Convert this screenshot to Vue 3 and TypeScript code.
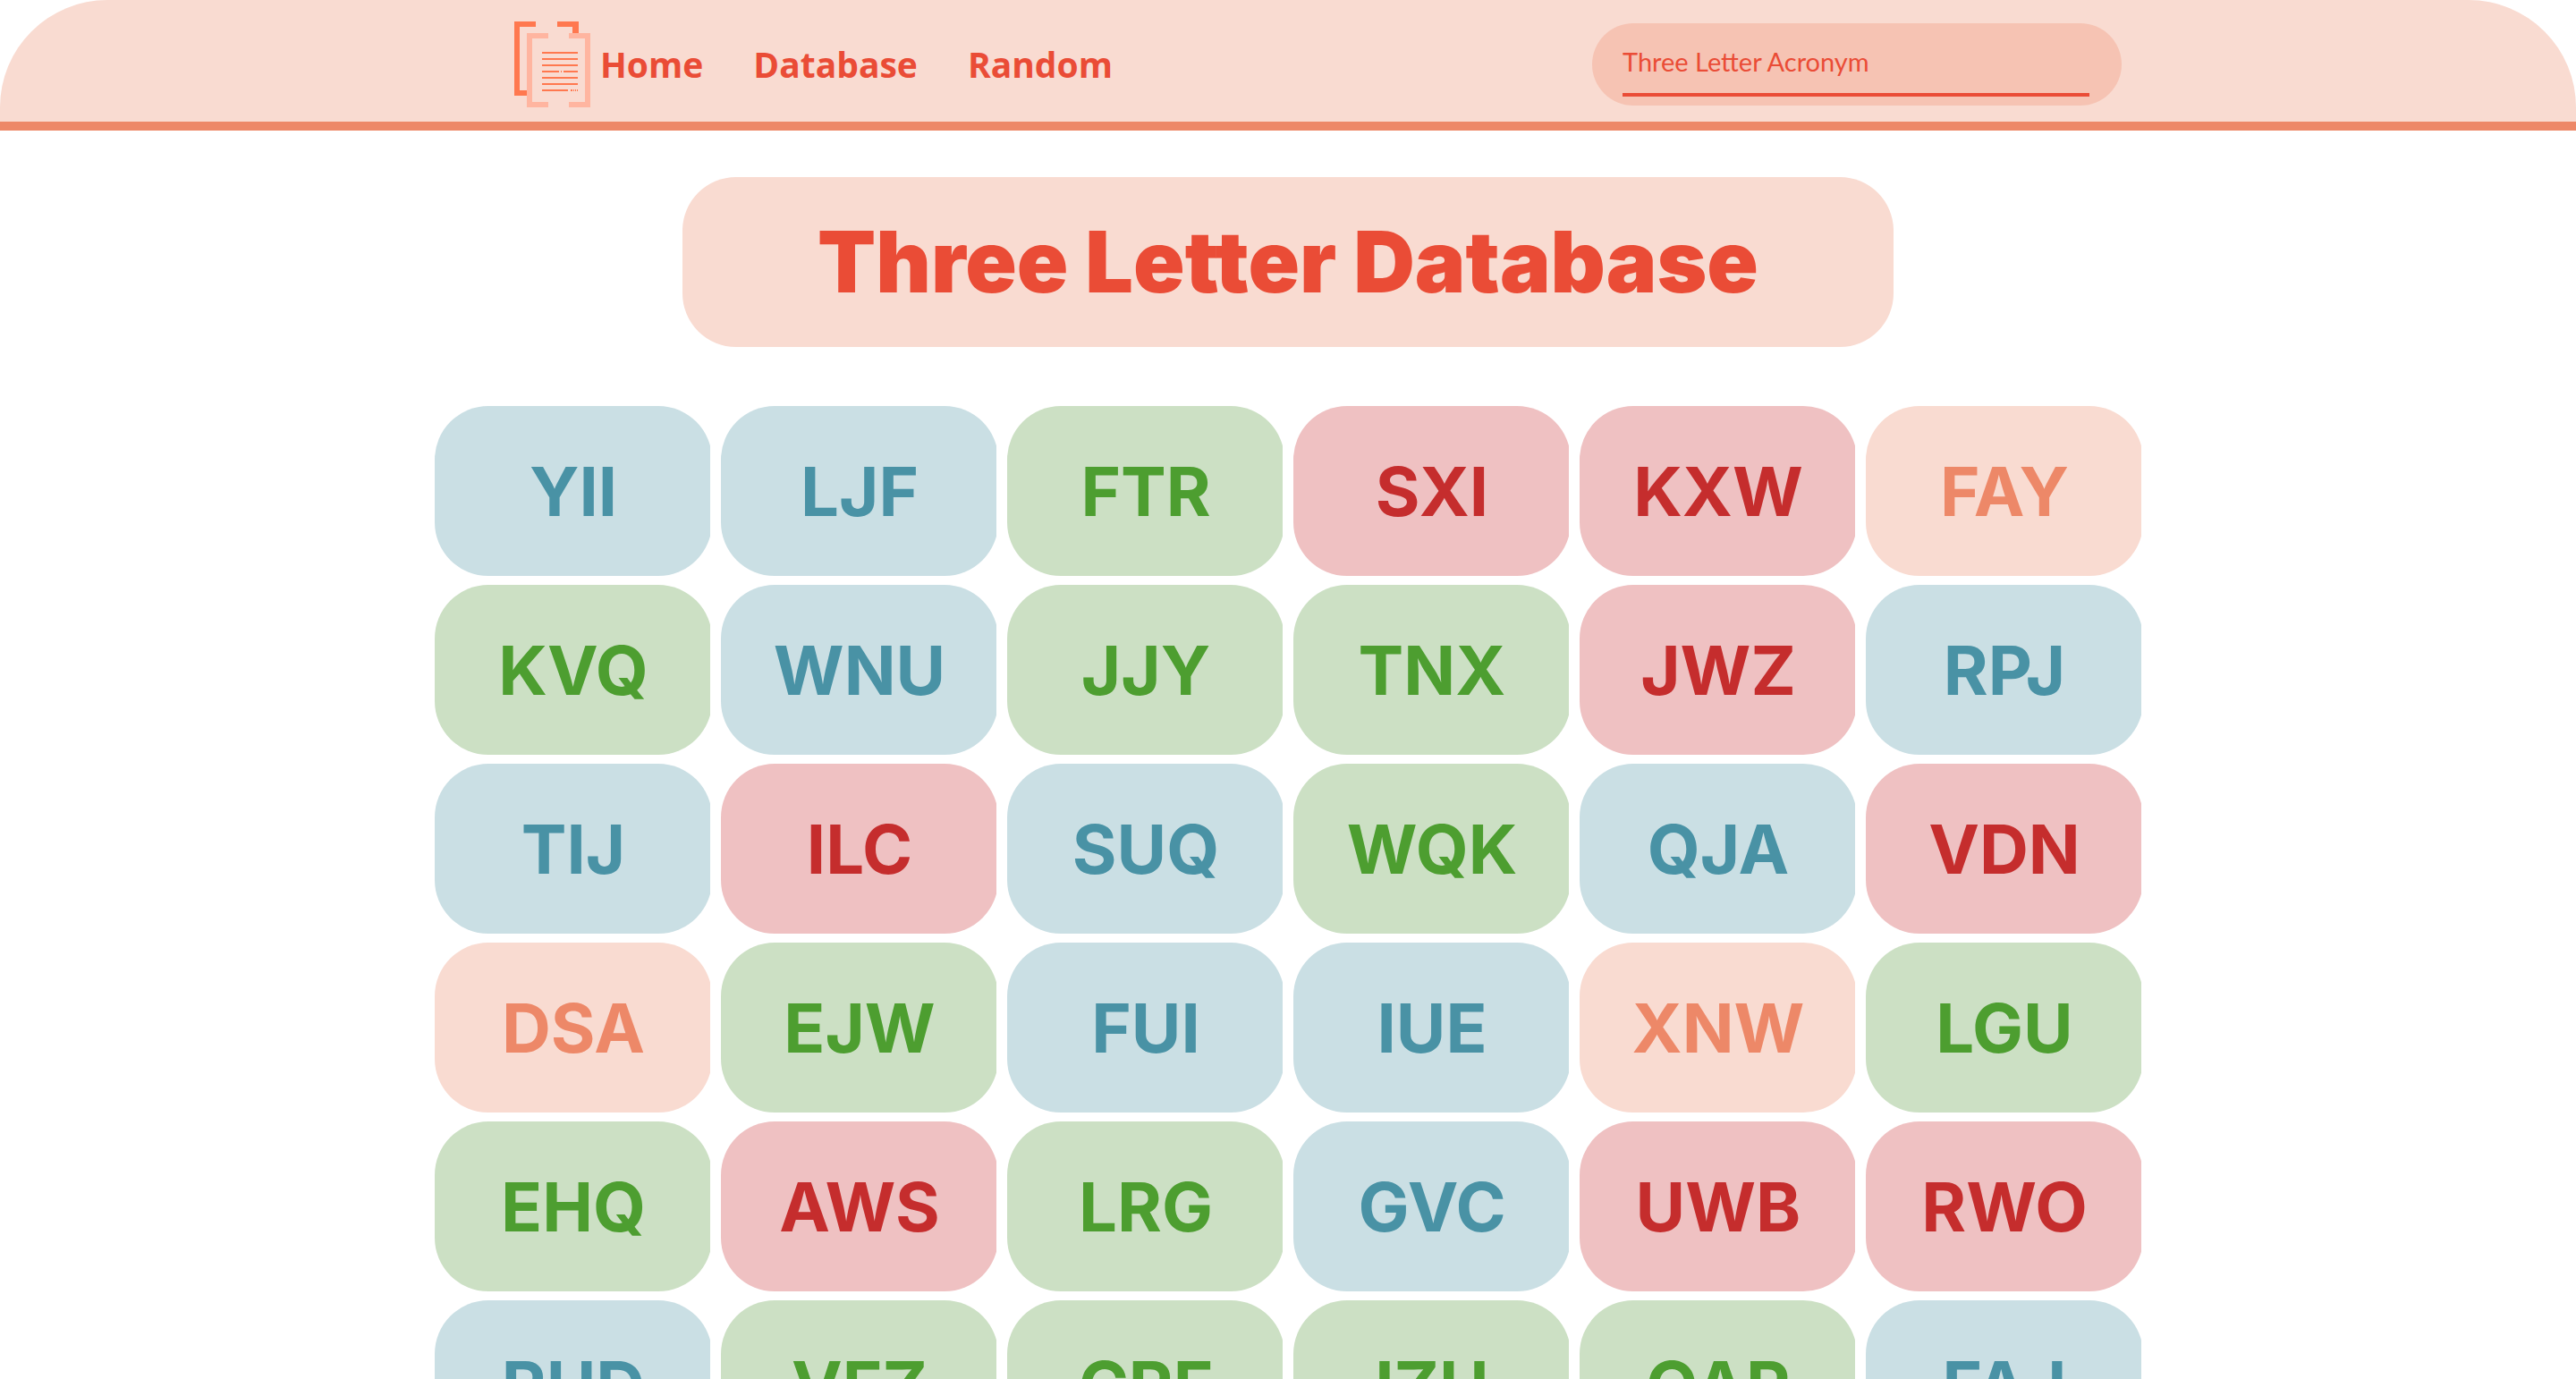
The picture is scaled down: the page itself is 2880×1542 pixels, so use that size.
<script setup lang="ts">
import { ref } from 'vue'

type Tone = 'blue' | 'green' | 'red' | 'peach'

interface Acronym {
  letters: string
  tone: Tone
}

const query = ref<string>('')

const tones: Record<string, Tone> = { b: 'blue', g: 'green', r: 'red', p: 'peach' }

const rows: string[] = [
  'YII:b LJF:b FTR:g SXI:r KXW:r FAY:p',
  'KVQ:g WNU:b JJY:g TNX:g JWZ:r RPJ:b',
  'TIJ:b ILC:r SUQ:b WQK:g QJA:b VDN:r',
  'DSA:p EJW:g FUI:b IUE:b XNW:p LGU:g',
  'EHQ:g AWS:r LRG:g GVC:b UWB:r RWO:r',
  'RUD:b VFZ:g CRF:g IZU:g OAR:g FAJ:b',
]

const acronyms: Acronym[] = rows.flatMap((row) =>
  row.split(' ').map((entry) => {
    const [letters, tone] = entry.split(':')
    return { letters, tone: tones[tone] }
  }),
)
</script>

<template>
  <div class="page">
    <header class="top-bar">
      <div class="top-inner">
        <nav class="nav" aria-label="Main">
          <a class="nav-link brand" href="#home">
            <svg class="logo" viewBox="0 0 86 96" aria-hidden="true">
              <path fill="#ff784f" d="M0 0h24v6H6v71h8v6H0zM48 0h24v13h-7V6H48z" />
              <path fill="#ffb5a0" d="M14 13h24v6H20v71h18v6H14zM61 13h24v83H61v-6h18V19H61z" />
              <path
                stroke="#ff784f"
                stroke-width="2"
                d="M31 35h40M31 42h40M31 49h40M31 56h19M52 56h1M55 56h16M31 63h40M31 70h40M31 77h29M63 77h2M66 77h1M68 77h1M70 77h1"
              />
            </svg>
            <span>Home</span>
          </a>
          <a class="nav-link" href="#database">Database</a>
          <a class="nav-link" href="#random">Random</a>
        </nav>
        <form class="search" role="search" @submit.prevent>
          <input
            v-model="query"
            class="search-input"
            type="text"
            aria-label="Three Letter Acronym"
            placeholder="Three Letter Acronym"
          />
        </form>
      </div>
    </header>

    <main class="content">
      <h1 class="title">Three Letter Database</h1>
      <ul class="grid">
        <li v-for="item in acronyms" :key="item.letters" class="cell">
          <a class="tile" :class="item.tone" :href="'#' + item.letters">{{ item.letters }}</a>
        </li>
      </ul>
    </main>
  </div>
</template>

<style>
body {
  margin: 0;
  background: #fff;
}
</style>

<style scoped>
.page {
  height: 100vh;
  overflow: hidden;
  font-family: Inter, 'Open Sans', sans-serif;
}

.top-bar {
  border-bottom: 10px solid #ed8868;
}

.top-inner {
  display: flex;
  align-items: center;
  justify-content: space-between;
  box-sizing: border-box;
  min-height: 136px;
  padding: 8px max(16px, calc(50% - 932px)) 0;
  border-radius: 120px 120px 0 0;
  background: #f9dbd1;
}

.nav {
  display: flex;
  align-items: center;
  gap: 56px;
  padding-left: 67px;
}

.nav-link {
  color: #ea4c36;
  font-family: 'Open Sans', sans-serif;
  font-size: 39px;
  font-weight: 700;
  line-height: 48px;
  text-decoration: none;
}

.brand {
  display: flex;
  align-items: center;
  gap: 10px;
}

.logo {
  display: block;
  width: 86px;
  height: 96px;
}

.search {
  box-sizing: border-box;
  width: 592px;
  height: 92px;
  margin-bottom: 1px;
  padding: 8px 36px 10px 34px;
  border-radius: 46px;
  background: #f6c3b3;
}

.search-input {
  box-sizing: border-box;
  width: 100%;
  height: 74px;
  padding: 0;
  border: 0;
  border-bottom: 4px solid #ea4c36;
  outline: 0;
  background: transparent;
  color: #ea4c36;
  font-family: Lato, sans-serif;
  font-size: 29px;
}

.search-input::placeholder {
  color: #ea4c36;
  opacity: 1;
}

.content {
  display: flex;
  flex-direction: column;
  align-items: center;
  padding: 52px 16px;
}

.title {
  box-sizing: border-box;
  width: 100%;
  max-width: 1354px;
  margin: 0 0 66px;
  border-radius: 60px;
  background: #f9dbd1;
  color: #ea4c36;
  font-size: 95px;
  font-weight: 900;
  line-height: 190px;
  text-align: center;
}

.grid {
  display: grid;
  grid-template-columns: repeat(6, 1fr);
  gap: 10px 12px;
  width: 100%;
  max-width: 1908px;
  margin: 0;
  padding: 0;
  list-style: none;
}

.cell {
  overflow: hidden;
}

.tile {
  display: block;
  width: calc(100% + 2px);
  border-radius: 60px;
  font-size: 76px;
  font-weight: 700;
  line-height: 190px;
  text-align: center;
  text-decoration: none;
}

.blue {
  background: #cadfe4;
  color: #4992a5;
}

.green {
  background: #cce0c4;
  color: #4d9e30;
}

.red {
  background: #efc1c2;
  color: #c52d2d;
}

.peach {
  background: #f9dbd1;
  color: #ed8868;
}
</style>
